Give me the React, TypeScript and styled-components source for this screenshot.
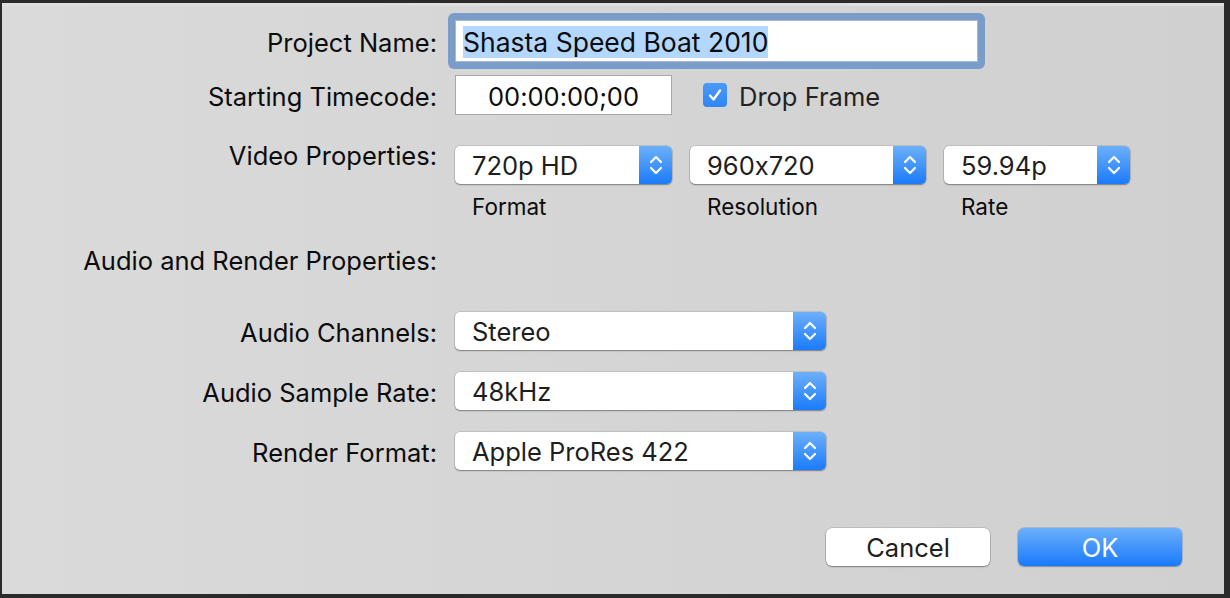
import styled, { createGlobalStyle } from "styled-components";

const GlobalStyle = createGlobalStyle`
  html, body {
    margin: 0;
    padding: 0;
    background: #2a2a2a;
    width: 1230px;
    height: 598px;
    overflow: hidden;
  }
  #root {
    width: 1230px;
    height: 598px;
    padding: 3px 6px 4px 2px;
    box-sizing: border-box;
  }
`;

const Panel = styled.div`
  height: 100%;
  background: linear-gradient(90deg, #dadada 0%, #d5d5d5 50%, #d0d0d0 100%);
  border-top: 3px solid #dedede;
  box-sizing: border-box;
  padding-top: 14px;
  font-family: Inter, "Liberation Sans", sans-serif;
  font-feature-settings: "calt" 0;
  font-size: 25.5px;
  color: #0c0c0c;
  display: flex;
  flex-direction: column;
`;

const Row = styled.div<{ $gap: number; $top?: boolean }>`
  display: flex;
  align-items: ${(p) => (p.$top ? "flex-start" : "center")};
  margin-top: ${(p) => p.$gap}px;
  column-gap: 18px;
`;

const Label = styled.div<{ $line?: number }>`
  width: 435px;
  flex: none;
  text-align: right;
  line-height: ${(p) => p.$line ?? 27}px;
  padding-top: ${(p) => (p.$line ? 0 : 3)}px;
  white-space: nowrap;
`;

const FocusRing = styled.div`
  margin: -7px;
  padding: 7px;
  border-radius: 6px;
  background: #7a9cc9;
  display: flex;
`;

const NameField = styled.div`
  width: 523px;
  height: 42px;
  background: #fff;
  border: 1px solid #a9b9cf;
  box-sizing: border-box;
  display: flex;
  align-items: center;
  padding: 2px 0 0 7px;
  font-size: 26.5px;
`;

const Selected = styled.span`
  background: #b3d7ff;
  line-height: 32px;
  white-space: nowrap;
`;

const Timecode = styled.div`
  width: 217px;
  height: 40px;
  background: #fff;
  border: 1px solid #a8a8a8;
  box-sizing: border-box;
  display: flex;
  align-items: center;
  justify-content: center;
  padding-top: 3px;
`;

const CheckRow = styled.div`
  display: flex;
  align-items: center;
  gap: 12px;
  margin-left: 13px;
  color: #222;
`;

const CheckText = styled.span`
  padding-top: 3px;
`;

const CheckBox = styled.div`
  width: 24px;
  height: 24px;
  border-radius: 4px;
  background: linear-gradient(#4b9af8, #2f86f6);
  display: flex;
  align-items: center;
  justify-content: center;
`;

const Controls = styled.div`
  display: flex;
  gap: 18px;
`;

const SelectGroup = styled.div`
  display: flex;
  flex-direction: column;
`;

const SelectBox = styled.div<{ $w: number }>`
  width: ${(p) => p.$w}px;
  height: 38px;
  background: #fff;
  border-radius: 5px;
  box-shadow: 0 0 0 0.5px rgba(0, 0, 0, 0.18), 0 1px 1.5px rgba(0, 0, 0, 0.35);
  display: flex;
  align-items: center;
  overflow: hidden;
  color: #1e1e1e;
`;

const SelectText = styled.span`
  flex: 1;
  padding-left: 17px;
  white-space: nowrap;
`;

const Stepper = styled.div`
  width: 33px;
  height: 100%;
  background: linear-gradient(#6cb0fa, #1b7bfb);
  display: flex;
  align-items: center;
  justify-content: center;
`;

const SubLabel = styled.div`
  padding-left: 17px;
  margin-top: 8px;
  line-height: 30px;
  font-size: 22.5px;
`;

const Footer = styled.div`
  display: flex;
  justify-content: flex-end;
  gap: 28px;
  margin-top: 58px;
  padding-right: 42px;
`;

const Button = styled.div<{ $primary?: boolean }>`
  width: 164px;
  height: 38px;
  border-radius: 6px;
  display: flex;
  align-items: center;
  justify-content: center;
  color: ${(p) => (p.$primary ? "#fff" : "#1e1e1e")};
  background: ${(p) => (p.$primary ? "linear-gradient(#6bb1fb, #1a79fb)" : "#fff")};
  box-shadow: ${(p) =>
    p.$primary
      ? "0 0 0 0.5px rgba(20, 90, 200, 0.4), 0 1px 1.5px rgba(0, 0, 0, 0.25)"
      : "0 0 0 0.5px rgba(0, 0, 0, 0.2), 0 1px 1.5px rgba(0, 0, 0, 0.35)"};
`;

function Chevrons() {
  return (
    <svg width="14" height="24" viewBox="0 0 14 24">
      <path
        d="M2 9 L7 4 L12 9 M2 15 L7 20 L12 15"
        fill="none"
        stroke="#fff"
        strokeWidth="2.2"
        strokeLinecap="round"
        strokeLinejoin="round"
      />
    </svg>
  );
}

function Select({ value, width }: { value: string; width: number }) {
  return (
    <SelectBox $w={width}>
      <SelectText>{value}</SelectText>
      <Stepper>
        <Chevrons />
      </Stepper>
    </SelectBox>
  );
}

export default function App() {
  return (
    <>
      <GlobalStyle />
      <Panel>
        <Row $gap={0}>
          <Label>Project Name:</Label>
          <FocusRing>
            <NameField>
              <Selected>Shasta Speed Boat 2010</Selected>
            </NameField>
          </FocusRing>
        </Row>
        <Row $gap={13}>
          <Label>Starting Timecode:</Label>
          <Timecode>00:00:00;00</Timecode>
          <CheckRow>
            <CheckBox>
              <svg width="20" height="20" viewBox="0 0 20 20">
                <path
                  d="M5 10.5 L8.5 14.5 L15 5.5"
                  fill="none"
                  stroke="#fff"
                  strokeWidth="2.3"
                  strokeLinecap="round"
                  strokeLinejoin="round"
                />
              </svg>
            </CheckBox>
            <CheckText>Drop Frame</CheckText>
          </CheckRow>
        </Row>
        <Row $gap={31} $top>
          <Label $line={20}>Video Properties:</Label>
          <Controls>
            <SelectGroup>
              <Select value="720p HD" width={217} />
              <SubLabel>Format</SubLabel>
            </SelectGroup>
            <SelectGroup>
              <Select value="960x720" width={236} />
              <SubLabel>Resolution</SubLabel>
            </SelectGroup>
            <SelectGroup>
              <Select value="59.94p" width={186} />
              <SubLabel>Rate</SubLabel>
            </SelectGroup>
          </Controls>
        </Row>
        <Row $gap={22}>
          <Label>Audio and Render Properties:</Label>
        </Row>
        <Row $gap={38}>
          <Label>Audio Channels:</Label>
          <Select value="Stereo" width={371} />
        </Row>
        <Row $gap={22}>
          <Label>Audio Sample Rate:</Label>
          <Select value="48kHz" width={371} />
        </Row>
        <Row $gap={22}>
          <Label>Render Format:</Label>
          <Select value="Apple ProRes 422" width={371} />
        </Row>
        <Footer>
          <Button>Cancel</Button>
          <Button $primary>OK</Button>
        </Footer>
      </Panel>
    </>
  );
}
